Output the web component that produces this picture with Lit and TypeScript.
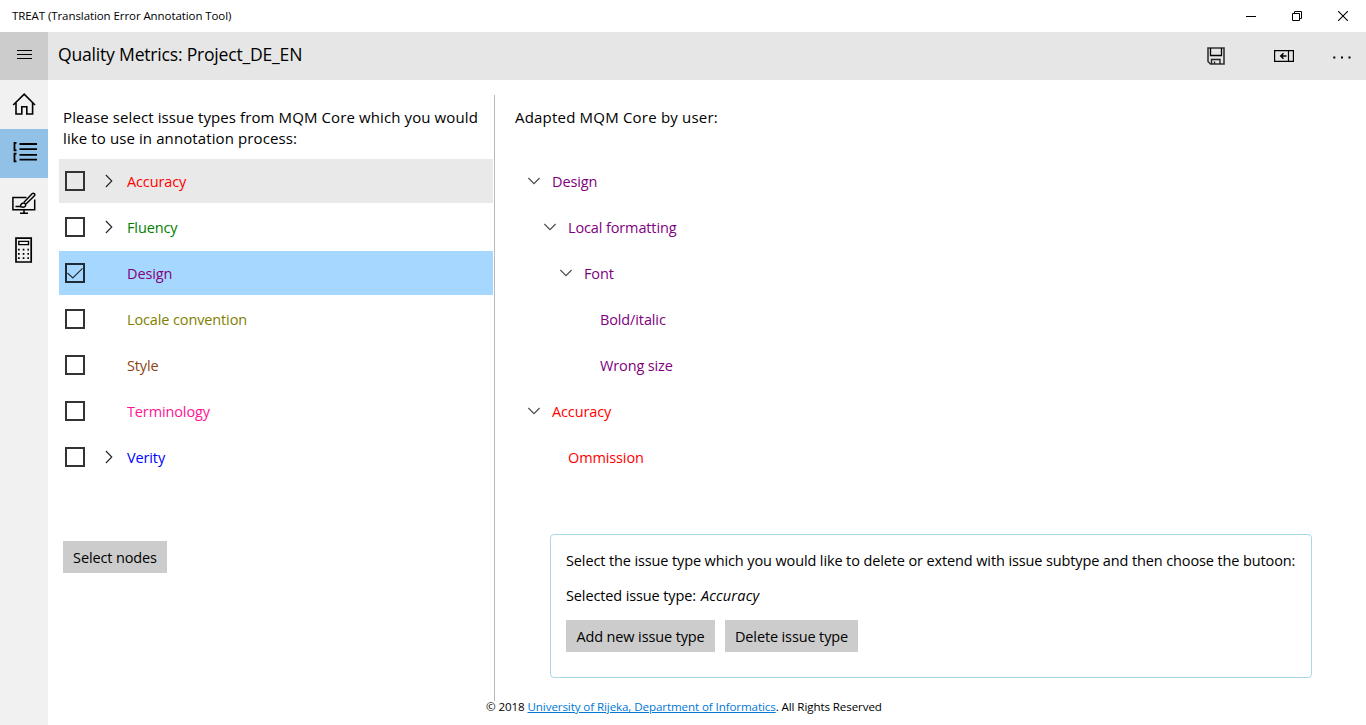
import { LitElement, html, css, svg } from "lit";
import { customElement } from "lit/decorators.js";
import { classMap } from "lit/directives/class-map.js";

interface IssueType {
  name: string;
  tone: string;
  expandable?: boolean;
  checked?: boolean;
  hovered?: boolean;
}

interface TreeNode {
  name: string;
  tone: string;
  depth: number;
  open?: boolean;
}

const ISSUES: IssueType[] = [
  { name: "Accuracy", tone: "red", expandable: true, hovered: true },
  { name: "Fluency", tone: "green", expandable: true },
  { name: "Design", tone: "purple", checked: true },
  { name: "Locale convention", tone: "olive" },
  { name: "Style", tone: "brown" },
  { name: "Terminology", tone: "pink" },
  { name: "Verity", tone: "blue", expandable: true },
];

const TREE: TreeNode[] = [
  { name: "Design", tone: "purple", depth: 0, open: true },
  { name: "Local formatting", tone: "purple", depth: 1, open: true },
  { name: "Font", tone: "purple", depth: 2, open: true },
  { name: "Bold/italic", tone: "purple", depth: 3 },
  { name: "Wrong size", tone: "purple", depth: 3 },
  { name: "Accuracy", tone: "red", depth: 0, open: true },
  { name: "Ommission", tone: "red", depth: 1 },
];

const icon = (w: number, h: number, body: unknown) => html`
  <svg width=${w} height=${h} viewBox="0 0 ${w} ${h}" fill="none" stroke="#000">${body}</svg>
`;

const minimizeIcon = icon(10, 10, svg`<path d="M0 5.5H10" />`);
const restoreIcon = icon(10, 10, svg`<path d="M.5 2.5H7.5V9.5H.5ZM2.5 2.5V.5H9.5V7.5H7.5" />`);
const closeIcon = icon(10, 10, svg`<path d="M0 0L10 10M10 0L0 10" stroke-width="1.1" />`);
const menuIcon = icon(16, 10, svg`<path d="M0 .5H15M0 4.5H15M0 8.5H15" />`);
const saveIcon = icon(18, 18, svg`
  <path d="M1 1H17V17H3.5L1 14.5Z" stroke="#333" stroke-width="1.6" />
  <path d="M3.5 1V8.5H14.5V1" stroke-width="1.3" />
  <path d="M4.5 17V12.5H13V17M7.5 17V14.5" stroke="#222" stroke-width="1.4" />
`);
const dockIcon = icon(20, 12, svg`
  <path d="M.6 .6H19.4V11.4H.6ZM14.5 .6V11.4" stroke-width="1.2" />
  <path d="M12.5 6H7M9.5 3.2L6.7 6L9.5 8.8" stroke-width="1.4" />
`);
const moreIcon = icon(18, 3, svg`
  <path d="M.3 1.5H2.3M8 1.5H10M15.5 1.5H17.5" stroke-width="2" />
`);
const homeIcon = icon(24, 24, svg`
  <path d="M1.2 13L12.2 2.2L23 13" stroke-width="1.6" />
  <path d="M4 10.8V22H9.8V14.8H14.8V22H20.6V10.8" stroke-width="1.6" />
`);
const listIcon = icon(24, 22, svg`
  <path d="M3.5 1.8H1.5V9.3H3.5M3.5 12.6H1.5V20.3H3.5" stroke-width="1.8" />
  <path d="M6.5 3H24M6.5 8.2H24M6.5 13.8H24M6.5 18.7H24" stroke-width="1.8" />
`);
const annotateIcon = icon(24, 22, svg`
  <path d="M14.5 5.5H.9V17.7H22.7V7.5M12 18V21M8 21.2H16" stroke-width="1.5" />
  <path d="M3.5 14.6H8.3C8.6 11.8 10.5 10.4 12.8 11.2C14.8 13.2 13.3 15.2 11 15.2C9.5 15.2 8.5 14.6 8 14.6" stroke-width="1.5" />
  <path d="M12 10.2L20.3 1.6C21.5.6 23.6 2 22.4 3.8L14 12" stroke-width="1.5" />
`);
const calculatorIcon = icon(18, 26, svg`
  <path d="M1 1.2H16.2V25H1Z" stroke-width="1.7" />
  <path d="M3.8 4.4H13.5V7.6H3.8Z" stroke-width="1.4" />
  <path d="M3 12.7H14M3 16.9H14M3 21.2H14" stroke-width="1.7" stroke-dasharray="1.7 3" />
`);
const chevronRight = icon(8, 14, svg`<path d="M.9 1L6.8 7L.9 13" stroke-width="1.1" stroke="#222" />`);
const chevronDown = icon(12, 8, svg`<path d="M.4 1L6 6.6L11.6 1" stroke-width="1.1" stroke="#484848" />`);
const checkIcon = icon(16, 16, svg`<path d="M.5 8L5.8 13L15.5 3.3" stroke-width="1.2" stroke="#263238" />`);

@customElement("app-root")
export class AppRoot extends LitElement {
  static styles = css`
    :host {
      display: flex;
      flex-direction: column;
      height: 725px;
      overflow: hidden;
      background: #fff;
      color: #000;
      font: 14.5px/21px "Open Sans", "Noto Sans", sans-serif;
      letter-spacing: -0.127px;
      white-space: nowrap;
    }
    svg { display: block; flex: none; }
    .titlebar { display: flex; align-items: center; height: 32px; flex: none; }
    .titlebar .name { flex: 1; padding: 0 0 2px 12px; font-size: 11.5px; letter-spacing: -0.08px; }
    .window-btn { width: 46px; display: flex; justify-content: center; }
    .header { display: flex; height: 48px; flex: none; background: #e6e6e6; }
    .menu { width: 48px; background: #ccc; display: grid; place-items: center; box-sizing: border-box; padding: 0 0 2px 1px; }
    .heading { flex: 1; padding-left: 10px; font-size: 17.6px; line-height: 44px; letter-spacing: -0.22px; }
    .command { width: 68px; display: grid; place-items: center; }
    .command.dock { padding-bottom: 1px; }
    .command.more { width: 48px; padding-top: 2px; }
    .body { flex: 1; display: flex; min-height: 0; }
    .rail { width: 48px; flex: none; background: #f1f1f1; }
    .rail-item { height: 48px; display: grid; place-items: center; box-sizing: border-box; }
    .rail-item.home { height: 49px; padding-bottom: 2px; }
    .rail-item.active { height: 49px; background: #91c1e7; padding: 0 0 3px 2px; }
    .rail-item.annotate { padding-top: 2px; }
    .rail-item.calc { height: 47px; }
    .main { flex: 1; display: flex; flex-direction: column; min-width: 0; }
    .columns { display: flex; height: 621px; flex: none; }
    .source { width: 447px; margin-top: 15px; box-sizing: border-box; flex: none; border-right: 1px solid #bababa; }
    .prompt { margin: 12px 0 0 15px; height: 42px; }
    .prompt, .caption { font-size: 15px; letter-spacing: 0.105px; }
    .caption { letter-spacing: 0.2px; }
    .issues { margin: 10px 1px 0 11px; display: flex; flex-direction: column; gap: 2px; }
    .row { height: 44px; display: flex; align-items: center; }
    .row.hovered { background: #e9e9e9; }
    .row.checked { background: #a6d8ff; }
    .box { width: 20px; height: 20px; margin-left: 6px; border: 2px solid #333; box-sizing: border-box; display: grid; place-items: center; }
    .checked .box { border-color: #202c35; }
    .twisty { width: 42px; display: flex; justify-content: center; padding-left: 6px; box-sizing: border-box; }
    .label { padding-top: 1px; }
    .target { flex: 1; padding: 27px 0 0 20px; display: flex; flex-direction: column; min-width: 0; }
    .tree { margin-top: 31px; display: flex; flex-direction: column; gap: 2px; }
    .node { height: 44px; display: flex; align-items: center; padding-left: 13px; }
    .node .slot { width: 24px; }
    .depth-1 { padding-left: 29px; }
    .depth-2 { padding-left: 45px; }
    .depth-3 { padding-left: 61px; }
    .red { color: #f00; }
    .green { color: #008000; }
    .purple { color: #800080; }
    .olive { color: #808000; }
    .brown { color: #8b4513; }
    .pink { color: #ff1493; }
    .blue { color: #00f; }
    .btn { font: inherit; letter-spacing: inherit; color: #000; background: #ccc; border: 0; padding: 1px 0 0; height: 32px; }
    .select { width: 104px; margin: 62px 0 0 15px; display: block; }
    .card { width: 762px; height: 144px; margin: 55px 0 0 35px; box-sizing: border-box; border: 1px solid #a9d8e6; border-radius: 4px; padding: 15px; }
    .card p { margin: 0 0 14px; letter-spacing: -0.12px; }
    .card .selected em { margin-left: 5px; letter-spacing: 0.2px; }
    .actions { display: flex; gap: 10px; }
    .add { width: 149px; }
    .delete { width: 133px; }
    .footer { padding-left: 438px; font-size: 11.6px; line-height: 12px; letter-spacing: -0.1px; }
    .footer a { color: #0078d7; text-decoration: underline; }
  `;

  render() {
    return html`
      <div class="titlebar">
        <span class="name">TREAT (Translation Error Annotation Tool)</span>
        <span class="window-btn">${minimizeIcon}</span>
        <span class="window-btn">${restoreIcon}</span>
        <span class="window-btn">${closeIcon}</span>
      </div>
      <div class="header">
        <div class="menu">${menuIcon}</div>
        <div class="heading">Quality Metrics: Project_DE_EN</div>
        <div class="command">${saveIcon}</div>
        <div class="command dock">${dockIcon}</div>
        <div class="command more">${moreIcon}</div>
      </div>
      <div class="body">
        <nav class="rail">
          <div class="rail-item home">${homeIcon}</div>
          <div class="rail-item active">${listIcon}</div>
          <div class="rail-item annotate">${annotateIcon}</div>
          <div class="rail-item calc">${calculatorIcon}</div>
        </nav>
        <div class="main">
          <div class="columns">
            <section class="source">
              <div class="prompt">
                Please select issue types from MQM Core which you would<br />like to use in annotation process:
              </div>
              <div class="issues">
                ${ISSUES.map((i) => html`
                  <div class=${classMap({ row: true, hovered: !!i.hovered, checked: !!i.checked })}>
                    <span class="box">${i.checked ? checkIcon : ""}</span>
                    <span class="twisty">${i.expandable ? chevronRight : ""}</span>
                    <span class="label ${i.tone}">${i.name}</span>
                  </div>
                `)}
              </div>
              <button class="btn select">Select nodes</button>
            </section>
            <section class="target">
              <div class="caption">Adapted MQM Core by user:</div>
              <div class="tree">
                ${TREE.map((n) => html`
                  <div class="node depth-${n.depth}">
                    <span class="slot">${n.open ? chevronDown : ""}</span>
                    <span class="label ${n.tone}">${n.name}</span>
                  </div>
                `)}
              </div>
              <div class="card">
                <p>Select the issue type which you would like to delete or extend with issue subtype and then choose the butoon:</p>
                <p class="selected">Selected issue type:<em>Accuracy</em></p>
                <div class="actions">
                  <button class="btn add">Add new issue type</button>
                  <button class="btn delete">Delete issue type</button>
                </div>
              </div>
            </section>
          </div>
          <footer class="footer">© 2018 <a>University of Rijeka, Department of Informatics</a>. All Rights Reserved</footer>
        </div>
      </div>
    `;
  }
}
